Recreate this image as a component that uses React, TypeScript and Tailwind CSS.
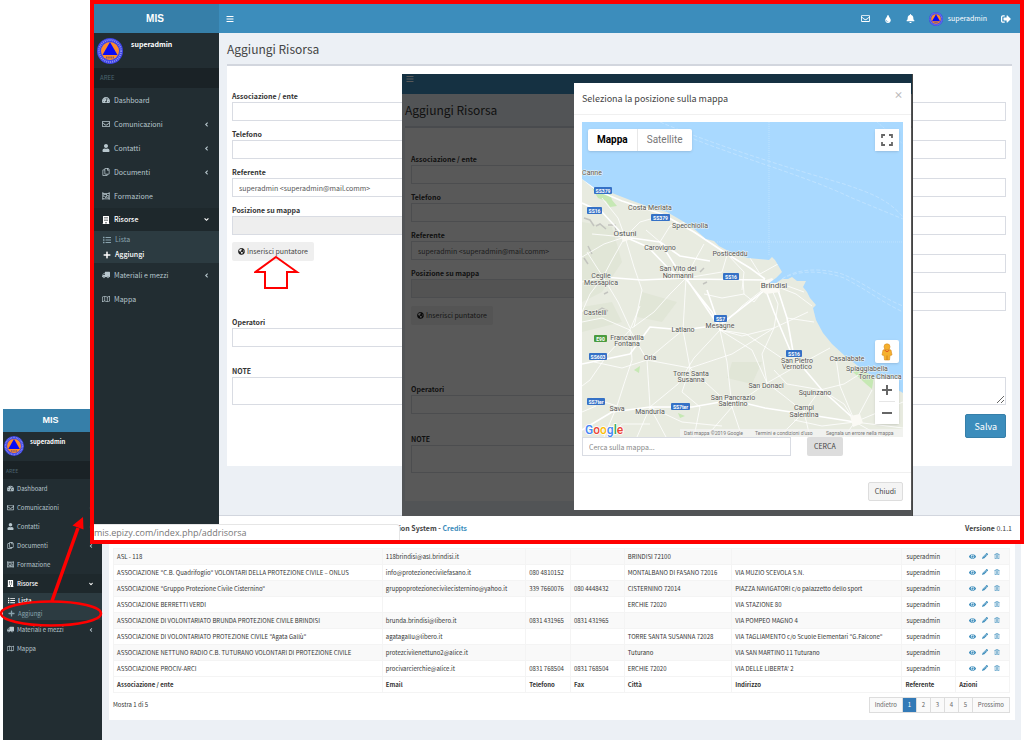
import { useId } from "react";
import type { ReactNode } from "react";
import clsx from "clsx";
import type { IconType } from "react-icons";
import {
  FaAngleDown,
  FaAngleLeft,
  FaBars,
  FaBell,
  FaBuilding,
  FaEye,
  FaGlobeAmericas,
  FaList,
  FaPencilAlt,
  FaPlus,
  FaRegCopy,
  FaRegEnvelope,
  FaRegMap,
  FaRegObjectGroup,
  FaRegTrashAlt,
  FaSignOutAlt,
  FaTachometerAlt,
  FaTint,
  FaTruck,
  FaUser,
} from "react-icons/fa";

interface MenuItem {
  label: string;
  icon: IconType;
  arrow?: boolean;
  flip?: boolean;
}

const MENU_TOP: MenuItem[] = [
  { label: "Dashboard", icon: FaTachometerAlt },
  { label: "Comunicazioni", icon: FaRegEnvelope, arrow: true },
  { label: "Contatti", icon: FaUser, arrow: true },
  { label: "Documenti", icon: FaRegCopy, arrow: true },
  { label: "Formazione", icon: FaRegObjectGroup },
];

const MENU_BOTTOM: MenuItem[] = [
  { label: "Materiali e mezzi", icon: FaTruck, arrow: true, flip: true },
  { label: "Mappa", icon: FaRegMap },
];

const ROWS = [
  ["ASL - 118", "118brindisi@asl.brindisi.it", "", "", "BRINDISI 72100", ""],
  ['ASSOCIAZIONE "C.B. Quadrifoglio" VOLONTARI DELLA PROTEZIONE CIVILE – ONLUS', "info@protezionecivilefasano.it", "080 4810152", "", "MONTALBANO DI FASANO 72016", "VIA MUZIO SCEVOLA S.N."],
  ['ASSOCIAZIONE "Gruppo Protezione Civile Cisternino"', "gruppoprotezionecivilecisternino@yahoo.it", "339 7660076", "080 4448432", "CISTERNINO 72014", "PIAZZA NAVIGATORI c/o palazzetto dello sport"],
  ["ASSOCIAZIONE BERRETTI VERDI", "", "", "", "ERCHIE 72020", "VIA STAZIONE 80"],
  ["ASSOCIAZIONE DI VOLONTARIATO BRUNDA PROTEZIONE CIVILE BRINDISI", "brunda.brindisi@libero.it", "0831 431965", "0831 431965", "", "VIA POMPEO MAGNO 4"],
  ['ASSOCIAZIONE DI VOLONTARIATO PROTEZIONE CIVILE "Agata Gallù"', "agatagallu@libero.it", "", "", "TORRE SANTA SUSANNA 72028", 'VIA TAGLIAMENTO c/o Scuole Elementari "G.Falcone"'],
  ["ASSOCIAZIONE NETTUNO RADIO C.B. TUTURANO VOLONTARI DI PROTEZIONE CIVILE", "protezcivilenettuno2@alice.it", "", "", "Tuturano", "VIA SAN MARTINO 11 Tuturano"],
  ["ASSOCIAZIONE PROCIV-ARCI", "procivarcierchie@alice.it", "0831 768504", "0831 768504", "ERCHIE 72020", "VIA DELLE LIBERTA' 2"],
];

const COLUMNS = ["Associazione / ente", "Email", "Telefono", "Fax", "Città", "Indirizzo", "Referente", "Azioni"];

// Town labels on the map: x, y, text, size
const TOWNS: [number, number, string, number][] = [
  [10, 53, "Canne", 7],
  [68, 88, "Costa Merlata", 7],
  [108, 106, "Specchiolla", 7],
  [43, 114, "Ostuni", 8],
  [78, 128, "Carovigno", 7],
  [148, 134, "Posticeddu", 7],
  [96, 149, "San Vito dei", 7],
  [96, 156, "Normanni", 7],
  [19, 156, "Ceglie", 7],
  [19, 163, "Messapica", 7],
  [192, 166, "Brindisi", 8],
  [13, 193, "Castelli", 7],
  [138, 206, "Mesagne", 7],
  [101, 210, "Latiano", 7],
  [45, 218, "Francavilla", 7],
  [45, 224, "Fontana", 7],
  [68, 238, "Oria", 7],
  [109, 254, "Torre Santa", 7],
  [109, 260, "Susanna", 7],
  [215, 241, "San Pietro", 7],
  [215, 247, "Vernotico", 7],
  [265, 239, "Casalabate", 7],
  [285, 249, "Spiaggiabella", 7],
  [298, 257, "Torre Chianca", 7],
  [184, 266, "San Donaci", 7],
  [233, 273, "Squinzano", 7],
  [151, 278, "San Pancrazio", 7],
  [151, 284, "Salentino", 7],
  [222, 288, "Campi", 7],
  [222, 295, "Salentina", 7],
  [35, 289, "Sava", 7],
  [68, 292, "Manduria", 7],
];

// Road shields: x, y, width, text
const SHIELDS: [number, number, number, string][] = [
  [12, 65, 18, "SS379"],
  [5, 85, 15, "SS16"],
  [69, 92, 19, "SS379"],
  [141, 151, 16, "SS16"],
  [132, 193, 13, "SS7"],
  [7, 231, 18, "SS603"],
  [204, 228, 16, "SS16"],
  [5, 276, 18, "SS7ter"],
  [89, 281, 19, "SS7ter"],
];

const MAIN_ROADS =
  "M0 56 L14 68 L40 79 L80 92 L112 110 L145 132 L168 146 L183 157 M0 81 L20 90 L43 115 L78 120 L98 134 L128 139 M43 115 L66 125 L90 150 L104 157 L183 158 M21 155 L60 158 L104 156 M104 156 L138 206 L125 168 M78 120 L92 142 L130 190 L138 208 M0 242 L48 232 L68 205 L101 208 L138 203 L183 168 L196 162 M183 166 L192 190 L208 228 L218 242 L240 268 L273 298 M196 168 L205 196 L212 235 M0 308 L30 290 L68 285 L110 285 L150 278 L183 286 L222 292 L273 300";

const MINOR_ROADS =
  "M43 115 L36 96 L20 76 M43 115 L58 100 L86 92 M43 115 L22 122 L0 135 M43 115 L30 138 L21 155 M43 115 L52 145 L60 168 L52 205 M43 115 L10 112 M21 155 L5 130 M21 155 L0 160 M21 155 L8 172 L0 190 M21 155 L36 180 L48 206 M78 120 L88 104 L104 100 M78 120 L64 108 M104 156 L88 172 L72 190 L50 206 M104 156 L101 208 M104 156 L112 140 L122 122 M104 156 L140 150 L146 130 M146 133 L162 150 L160 168 M168 136 L178 152 L196 142 M161 158 L162 172 L172 180 L183 166 M183 166 L160 184 L138 206 M138 208 L160 214 L192 206 L226 190 M138 208 L112 236 L96 262 L68 285 M138 208 L145 240 L150 285 M138 208 L170 228 L185 261 M138 208 L164 212 L213 245 M101 208 L84 222 L65 238 M101 208 L108 246 M48 208 L20 196 L0 200 M48 208 L26 232 L8 258 L0 264 M48 208 L50 238 L42 262 L35 284 M48 208 L65 238 L68 285 M48 208 L58 184 M65 238 L108 246 L150 232 L192 206 M65 238 L40 246 L12 240 M108 246 L100 270 L118 285 M108 246 L150 285 L160 315 M185 261 L150 285 M185 261 L213 245 L226 238 L248 226 M185 261 L202 274 L222 290 M150 285 L130 308 L110 315 M68 285 L55 315 M68 285 L84 315 M68 285 L100 300 L140 304 M35 284 L10 276 M35 284 L22 315 M222 290 L206 306 L196 315 M222 290 L228 315 M222 290 L238 268 L262 262 L278 252 M240 268 L205 262 L192 248 M240 268 L262 282 L273 300 M273 300 L258 264 L254 236 M273 300 L290 268 M273 300 L321 280 M273 300 L321 306 M273 300 L262 315 M273 300 L300 315 M273 300 L240 304 L212 298 M192 206 L196 182 L190 168 M192 206 L180 232 L185 261 M205 196 L232 200 M196 165 L214 172 L230 184 M200 162 L222 170 M162 172 L140 176 L122 172 M118 285 L112 315 M0 290 L14 284 M26 315 L40 302 L68 302";

const COAST =
  "M0 0 H321 V271 L306 262 L290 254 L276 244 L263 234 L250 222 L241 211 L234 198 L231 186 L234 183 L228 176 L225 170 L221 165 L224 159 L215 159 L210 155 L206 157 L200 157 L194 161 L187 161 L194 156 L200 150 L196 143 L193 138 L190 135 L187 138 L166 136 L150 131 L137 124 L132 119 L124 117 L110 105 L97 97 L85 90 L70 86 L48 78 L30 71 L14 67 L0 57 Z";

function Logo({ className }: { className?: string }) {
  return (
    <svg viewBox="0 0 26 26" className={className} aria-hidden="true">
      <circle cx="13" cy="13" r="13" fill="#3d43e8" />
      <circle cx="13" cy="13" r="11" fill="none" stroke="#8f93ee" strokeWidth="2" strokeDasharray="1 1" />
      <circle cx="13" cy="13" r="9" fill="#ff8a2a" />
      <path d="M13 4 L20.500 17 H5.500 Z" fill="#0a0af5" />
      <path d="M9 19.500 H17" stroke="#7a5a78" strokeWidth="2" strokeDasharray="1.500 0.700" />
    </svg>
  );
}

function SidebarLink({ item, small }: { item: MenuItem; small?: boolean }) {
  const Icon = item.icon;
  return (
    <li>
      <a href="#" className={clsx("flex items-center", small ? "h-[19px] gap-[3px] pr-2 pl-1" : "h-6 gap-1 pr-[9px] pl-2")}>
        <Icon className={clsx("shrink-0", small ? "size-[7px]" : "size-2", item.flip && "-scale-x-100")} />
        <span className="flex-1">{item.label}</span>
        {item.arrow && <FaAngleLeft className={small ? "size-[6px]" : "size-[7px]"} />}
      </a>
    </li>
  );
}

function Sidebar({ small, current }: { small?: boolean; current: string }) {
  const iconSize = small ? "size-[7px]" : "size-2";
  const subLink = small ? "h-[13px] gap-[3px] pl-[5px]" : "h-[15px] gap-1 pl-[9px]";

  return (
    <aside className={clsx("shrink-0 bg-[#222d32] text-[#b8c7ce]", small ? "w-[99px] text-[6px]" : "w-[125px] text-[7px]")}>
      <div className={clsx("flex items-start text-white", small ? "h-[29px] gap-[6px] pt-1 pl-px" : "h-[35px] gap-2 pt-[5px] pl-[3px]")}>
        <Logo className={small ? "size-5" : "size-[26px]"} />
        <p className={clsx("font-bold", small ? "leading-[11px]" : "leading-3")}>superadmin</p>
      </div>
      <p className={clsx("flex items-center bg-[#1a2226] text-[#4b646f]", small ? "h-[18px] pl-[3px] text-[5px]" : "h-5 pl-[6px] text-[6px]")}>
        AREE
      </p>
      <nav>
        <ul>
          {MENU_TOP.map((item) => (
            <SidebarLink key={item.label} item={item} small={small} />
          ))}
          <li className="text-white">
            <a href="#" className={clsx("flex items-center bg-[#1e282c] font-medium", small ? "h-[19px] gap-[3px] pr-2 pl-1" : "h-[23px] gap-1 pr-[9px] pl-2")}>
              <FaBuilding className={clsx("shrink-0", iconSize)} />
              <span className="flex-1">Risorse</span>
              <FaAngleDown className={small ? "size-[6px]" : "size-[7px]"} />
            </a>
            <ul className={clsx("bg-[#2c3b41] text-[#8aa4af]", small ? "pt-px" : "py-px")}>
              {[{ label: "Lista", icon: FaList }, { label: "Aggiungi", icon: FaPlus }].map(({ label, icon: Icon }) => (
                <li key={label}>
                  <a href="#" className={clsx("flex items-center", subLink, current === label && "font-medium text-white")}>
                    <Icon className={clsx("shrink-0", iconSize)} />
                    {label}
                  </a>
                </li>
              ))}
            </ul>
          </li>
          {MENU_BOTTOM.map((item) => (
            <SidebarLink key={item.label} item={item} small={small} />
          ))}
        </ul>
      </nav>
    </aside>
  );
}

function Field({ label, value, disabled, hideLabel }: { label: string; value?: string; disabled?: boolean; hideLabel?: boolean }) {
  const id = useId();
  return (
    <div>
      {hideLabel ? (
        <div className="h-[11px]" />
      ) : (
        <label htmlFor={id} className="block h-[11px] font-bold leading-[11px] text-[#333]">
          {label}
        </label>
      )}
      <input
        id={id}
        type="text"
        aria-label={label}
        defaultValue={value}
        disabled={disabled}
        className="block h-[19px] w-full border border-[#d9dce3] bg-white px-[6px] text-[#555] disabled:bg-[#eee]"
      />
    </div>
  );
}

// Resource form, also shown dimmed behind the map dialog
function ResourceForm({ preview }: { preview?: boolean }) {
  const noteId = useId();
  return (
    <form
      className={clsx("border-t-2 border-[#d2d6de] bg-white pr-[6px] pb-7 text-[7px]", preview ? "pt-[26px] pl-[6px]" : "pt-[25px] pl-[5px]")}
      onSubmit={(e) => e.preventDefault()}
    >
      <div className={clsx("grid gap-4", !preview && "grid-cols-2")}>
        <div>
          <div className="space-y-2">
            <Field label="Associazione / ente" />
            <Field label="Telefono" />
            <Field label="Referente" value="superadmin <superadmin@mail.comm>" />
            <Field label="Posizione su mappa" disabled />
          </div>
          <button
            type="button"
            className={clsx("flex h-[19px] items-center gap-[2px] rounded-xs bg-[#efefef] px-[6px] text-[#444]", preview ? "mt-2" : "mt-[7px]")}
          >
            <FaGlobeAmericas className="size-[7px] text-[#222]" />
            Inserisci puntatore
          </button>
          <div className={preview ? "mt-[59px]" : "mt-[56px]"}>
            <Field label="Operatori" />
          </div>
        </div>
        {!preview && (
          <div className="space-y-2">
            {["Email", "Fax", "Città", "Indirizzo", "Provincia", "CAP"].map((label) => (
              <Field key={label} label={label} hideLabel />
            ))}
          </div>
        )}
      </div>
      <label htmlFor={noteId} className={clsx("block h-[11px] font-bold leading-[11px] text-[#333]", preview ? "mt-5" : "mt-[19px]")}>
        NOTE
      </label>
      <textarea id={noteId} className="block h-7 w-full border border-[#d9dce3] bg-white px-[6px]" />
      {!preview && (
        <div className="mt-[9px] flex justify-end">
          <button type="submit" className="h-6 rounded-xs border border-[#367fa9] bg-[#3c8dbc] px-2 text-[9px] text-white">
            Salva
          </button>
        </div>
      )}
    </form>
  );
}

function MapDrawing() {
  return (
    <svg viewBox="0 0 321 315" preserveAspectRatio="xMidYMid slice" className="block h-[315px] w-full font-[Roboto,sans-serif]">
      <rect width="321" height="315" fill="#e8ebe0" />
      <g fill="#e1e6d7">
        <path d="M0 100 L30 105 L40 140 L20 170 L0 180 Z" />
        <path d="M60 170 L95 180 L80 200 L55 195 Z" />
        <path d="M0 185 L30 180 L40 200 L0 210 Z" />
        <path d="M150 240 L180 240 L170 262 L145 256 Z" />
      </g>
      <g fill="#c6e8b4">
        <path d="M10 66 L28 70 L30 78 L35 84 L28 85 L24 79 L16 76 Z" />
        <path d="M271 250 L278 248 L292 254 L290 267 L284 262 Z" />
        <path d="M52 248 L58 244 L57 251 Z M96 291 L103 294 L98 296 Z" />
      </g>
      <path
        d="M2 96 L8 98 L12 104 M14 104 L18 102 L24 107 M26 103 L33 103 L34 109 M6 124 L10 132 M2 136 L6 142 M22 172 L26 170 M118 150 L122 146 M125 160 L121 162 M14 190 L20 186 L26 189"
        fill="none"
        stroke="#c3c4bf"
        strokeWidth="1.500"
      />
      <path d={MINOR_ROADS} fill="none" stroke="#fff" strokeWidth="0.900" strokeLinejoin="round" opacity="0.900" />
      <path d={MAIN_ROADS} fill="none" stroke="#fff" strokeWidth="1.600" strokeLinejoin="round" />
      <path d="M178 160 L190 156 L197 164 L198 170 L184 172 L178 168 Z M38 111 L47 111 L49 117 L41 120 Z M268 294 L278 292 L281 301 L271 305 Z" fill="#fbfaf5" />
      <path d={COAST} fill="#a9d9ff" />
      <g fill="none" stroke="#c4e5ff" strokeWidth="0.800" strokeDasharray="4 2">
        <path d="M78 0 C130 22 200 44 262 62 C285 70 305 76 321 95" />
        <path d="M95 10 C150 34 220 52 270 76 L321 97" />
        <path d="M200 157 C215 146 240 146 260 152 C285 162 300 176 321 184" />
        <path d="M200 157 C215 148 240 148 262 156 C285 168 300 180 321 190" />
        <path d="M135 120 H321 M187 0 V134 M295 0 L321 22" strokeDasharray="1 1" />
      </g>
      {SHIELDS.map(([x, y, width, text], i) => (
        <g key={i}>
          <rect x={x} y={y} width={width} height="7" rx="1" fill="#3571c6" />
          <text x={x + width / 2} y={y + 5.5} textAnchor="middle" fontSize="5" fontWeight="700" fill="#fff">
            {text}
          </text>
        </g>
      ))}
      <rect x="12" y="213" width="13" height="7" rx="1" fill="#4a9b3f" />
      <text x="18.500" y="218.500" textAnchor="middle" fontSize="5" fontWeight="700" fill="#fff">
        E90
      </text>
      {TOWNS.map(([x, y, text, size], i) => (
        <text key={i} x={x} y={y} textAnchor="middle" fontSize={size} fill="#555" stroke="#f4f5ee" strokeWidth="1" paintOrder="stroke">
          {text}
        </text>
      ))}
      <rect x="98" y="307" width="223" height="8" fill="#f5f5f5" opacity="0.700" />
      <g fontSize="5" fill="#777">
        <text x="102" y="313">Dati mappa ©2019 Google</text>
        <text x="173" y="313">Termini e condizioni d'uso</text>
        <text x="244" y="313">Segnala un errore nella mappa</text>
      </g>
      <text x="3" y="312" fontSize="12" fontWeight="500" stroke="#fff" strokeWidth="1.500" paintOrder="stroke">
        <tspan fill="#4285f4">G</tspan>
        <tspan fill="#ea4335">o</tspan>
        <tspan fill="#fbbc05">o</tspan>
        <tspan fill="#4285f4">g</tspan>
        <tspan fill="#34a853">l</tspan>
        <tspan fill="#ea4335">e</tspan>
      </text>
    </svg>
  );
}

function MapControl({ label, className, children }: { label: string; className?: string; children: ReactNode }) {
  return (
    <button type="button" aria-label={label} className={clsx("flex w-6 items-center justify-center bg-white text-[#666]", className)}>
      {children}
    </button>
  );
}

function MapPicker() {
  return (
    <div className="relative">
      <MapDrawing />
      <div className="absolute top-[7px] left-[6px] flex h-[22px] rounded-xs bg-white font-[Roboto,sans-serif] text-[10px] shadow-sm">
        <button type="button" className="border-r border-[#e8e8e8] px-[9px] font-bold text-black">
          Mappa
        </button>
        <button type="button" className="px-[9px] text-[#777]">
          Satellite
        </button>
      </div>
      <div className="absolute top-[7px] right-1 rounded-xs shadow-sm">
        <MapControl label="Schermo intero" className="h-[22px]">
          <svg viewBox="0 0 12 12" className="size-3" fill="none" stroke="currentColor" strokeWidth="1.800">
            <path d="M1 4 V1 H4 M8 1 H11 V4 M11 8 V11 H8 M4 11 H1 V8" />
          </svg>
        </MapControl>
      </div>
      <div className="absolute right-1 bottom-[13px] flex flex-col gap-4">
        <MapControl label="Street View" className="h-[23px] rounded-xs shadow-sm">
          <svg viewBox="0 0 12 18" className="h-[18px] w-3">
            <path d="M2 7 Q6 5.500 10 7 L11 12 L9 12.500 L8.500 17 H3.500 L3 12.500 L1 12 Z" fill="#f5b02e" stroke="#d98b1c" strokeWidth="0.600" />
            <circle cx="6" cy="3.800" r="3" fill="#f5b02e" stroke="#d98b1c" strokeWidth="0.600" />
            <path d="M3.500 7 L6 8.800 L8.500 7" fill="none" stroke="#e0561f" strokeWidth="1" />
            <path d="M6 12.500 V17" stroke="#c77a14" strokeWidth="0.800" />
          </svg>
        </MapControl>
        <div className="rounded-xs bg-white shadow-sm">
          <MapControl label="Ingrandisci" className="h-[22px]">
            <svg viewBox="0 0 10 10" className="size-[10px]" stroke="currentColor" strokeWidth="2">
              <path d="M0 5 H10 M5 0 V10" />
            </svg>
          </MapControl>
          <div className="mx-1 h-px bg-[#e6e6e6]" />
          <MapControl label="Riduci" className="h-[22px]">
            <svg viewBox="0 0 10 10" className="size-[10px]" stroke="currentColor" strokeWidth="2">
              <path d="M0 5 H10" />
            </svg>
          </MapControl>
        </div>
      </div>
    </div>
  );
}

function MapDialog() {
  return (
    <div role="dialog" aria-label="Seleziona la posizione sulla mappa" className="absolute top-[9px] right-px bottom-[6px] left-[172px] flex flex-col bg-white text-[7px] text-[#444]">
      <div className="flex h-8 items-center justify-between border-b border-[#f0f0f0] px-2">
        <h2 className="text-[9px]">Seleziona la posizione sulla mappa</h2>
        <button type="button" aria-label="Chiudi finestra" className="pb-2 text-[9px] font-bold text-[#bbb]">
          ×
        </button>
      </div>
      <div className="px-2 pt-[7px] pb-4">
        <MapPicker />
        <div className="flex gap-4">
          <input type="text" aria-label="Cerca sulla mappa" placeholder="Cerca sulla mappa..." className="h-[19px] w-[209px] border border-[#d9dce3] bg-white px-[6px] placeholder:text-[#888]" />
          <button type="button" className="h-[19px] rounded-xs bg-[#ddd] px-[7px]">
            CERCA
          </button>
        </div>
      </div>
      <div className="flex justify-end border-t border-[#f0f0f0] px-2 pt-[9px]">
        <button type="button" className="h-[19px] rounded-xs border border-[#ddd] bg-[#f4f4f4] px-[6px]">
          Chiudi
        </button>
      </div>
    </div>
  );
}

function MapWindow() {
  return (
    <section className="absolute top-[70px] right-[107px] bottom-6 left-[308px] overflow-hidden border-r border-[#444] bg-[#ecf0f5]">
      <div className="flex h-5 items-start bg-[#3c8dbc] px-1 pt-px text-white">
        <FaBars className="size-2" />
      </div>
      <div className="pl-[3px]">
        <h1 className="flex h-8 items-center text-[12px] text-[#333]">Aggiungi Risorsa</h1>
        <ResourceForm preview />
      </div>
      <div className="absolute inset-0 bg-black/65" />
      <MapDialog />
    </section>
  );
}

function FrontWindow() {
  return (
    <div className="absolute top-0 right-0 left-[90px] border-4 border-[#f00] bg-white">
      <header className="flex h-[29px] bg-[#3c8dbc] text-white">
        <a href="#" className="flex w-[125px] items-center justify-center bg-[#367fa9] pr-[3px] font-['Liberation_Sans',sans-serif] text-[10px] font-bold">
          MIS
        </a>
        <div className="flex flex-1 items-center justify-between px-[7px] text-[7px]">
          <button type="button" aria-label="Menu">
            <FaBars className="size-2" />
          </button>
          <div className="flex items-center gap-[14px] pr-[2px]">
            <FaRegEnvelope className="size-[9px]" />
            <FaTint className="size-2" />
            <FaBell className="size-[9px]" />
            <a href="#" className="flex items-center gap-[5px]">
              <Logo className="size-[14px]" />
              superadmin
            </a>
            <FaSignOutAlt className="size-[10px]" />
          </div>
        </div>
      </header>
      <div className="flex">
        <Sidebar current="Aggiungi" />
        <div className="min-w-0 flex-1 bg-[#ecf0f5]">
          <main className="px-2 pb-[49px]">
            <h1 className="flex h-[31px] items-center text-[12px] text-[#444]">Aggiungi Risorsa</h1>
            <ResourceForm />
          </main>
          <footer className="flex h-[25px] items-center justify-between border-t border-[#d2d6de] bg-white px-2 pt-px text-[7px] text-[#444]">
            <p className="w-60 text-right font-bold">
              Information System - <a href="#" className="text-[#3c8dbc]">Credits</a>
            </p>
            <p>
              <b>Versione</b> 0.1.1
            </p>
          </footer>
        </div>
      </div>
      <MapWindow />
      <div className="absolute bottom-0 left-0 h-4 w-[306px] rounded-tr-sm border-t border-r border-[#e6e6e6] bg-white font-['Open_Sans',sans-serif] text-[9px] leading-4 text-[#777]">
        mis.epizy.com/index.php/addrisorsa
      </div>
      {/* Pointer to the map button */}
      <svg viewBox="0 0 46 36" className="absolute top-[251px] left-[160px] h-9 w-[46px]" fill="none" stroke="#f00" strokeWidth="2">
        <path d="M22 2 L43 17 H33 V33 H11 V17 H1.500 Z" />
      </svg>
    </div>
  );
}

function RowActions() {
  return (
    <div className="flex justify-center gap-[6px] pl-1 text-[#3c8dbc]">
      <a href="#" aria-label="Visualizza">
        <FaEye className="size-[7px]" />
      </a>
      <a href="#" aria-label="Modifica">
        <FaPencilAlt className="size-[6px]" />
      </a>
      <a href="#" aria-label="Elimina">
        <FaRegTrashAlt className="size-[6px]" />
      </a>
    </div>
  );
}

function BackWindow() {
  return (
    <div className="mr-[3px] ml-[3px] flex flex-1 flex-col">
      <header className="flex h-[23px] bg-[#3c8dbc] text-white">
        <a href="#" className="flex w-[99px] items-center justify-center bg-[#367fa9] pr-[4px] font-['Liberation_Sans',sans-serif] text-[9px] font-bold">
          MIS
        </a>
      </header>
      <div className="flex flex-1">
        <Sidebar small current="Lista" />
        <main className="min-w-0 flex-1 bg-[#ecf0f5] pr-[6px] pl-[7px] text-[6px] text-[#333]">
          <div className="bg-white pt-[116px] pr-[5px] pb-[7px] pl-1">
            <table className="w-full table-fixed border-collapse">
              <colgroup>
                <col className="w-[30%]" />
                <col className="w-[16%]" />
                <col className="w-[5%]" />
                <col className="w-[6%]" />
                <col className="w-[12%]" />
                <col className="w-[19%]" />
                <col className="w-[6%]" />
                <col className="w-[6%]" />
              </colgroup>
              <tbody>
                {ROWS.map((row) => (
                  <tr key={row[0]} className="h-4 odd:bg-[#f9f9f9]">
                    {row.map((cell, i) => (
                      <td key={i} className="truncate border border-[#f4f4f4] px-[3px] leading-[10px]">
                        {cell}
                      </td>
                    ))}
                    <td className="border border-[#f4f4f4] px-1 leading-[10px]">superadmin</td>
                    <td className="border border-[#f4f4f4] px-1">
                      <RowActions />
                    </td>
                  </tr>
                ))}
              </tbody>
              <tfoot>
                <tr className="h-4">
                  {COLUMNS.map((column) => (
                    <th key={column} className="border border-[#f4f4f4] px-[3px] text-left font-bold leading-[10px]">
                      {column}
                    </th>
                  ))}
                </tr>
              </tfoot>
            </table>
            <div className="mt-1 flex items-center justify-between">
              <p>Mostra 1 di 5</p>
              <div className="flex h-4 divide-x divide-[#ddd] border border-[#ddd] bg-[#fafafa] text-[#666]">
                <button type="button" className="px-[5px]">Indietro</button>
                {[1, 2, 3, 4, 5].map((page) => (
                  <button key={page} type="button" className={clsx("w-[14px]", page === 1 && "bg-[#337ab7] text-white")}>
                    {page}
                  </button>
                ))}
                <button type="button" className="px-[5px]">Prossimo</button>
              </div>
            </div>
          </div>
        </main>
      </div>
    </div>
  );
}

export default function App() {
  return (
    <div className="relative flex min-h-screen flex-col overflow-hidden bg-white pt-[409px] font-['Noto_Sans_CJK_SC',sans-serif] leading-none">
      <BackWindow />
      <FrontWindow />
      {/* Highlight of the "Aggiungi" entry */}
      <svg viewBox="0 0 104 114" className="pointer-events-none absolute top-[515px] left-0 h-[114px] w-[104px]">
        <ellipse cx="51" cy="98.500" rx="50" ry="12" fill="none" stroke="#f00" strokeWidth="2.500" />
        <path d="M52 86 L78 13" stroke="#f00" strokeWidth="3.500" />
        <path d="M83 2 L72.500 10.500 L83.500 14.500 Z" fill="#f00" />
      </svg>
    </div>
  );
}
